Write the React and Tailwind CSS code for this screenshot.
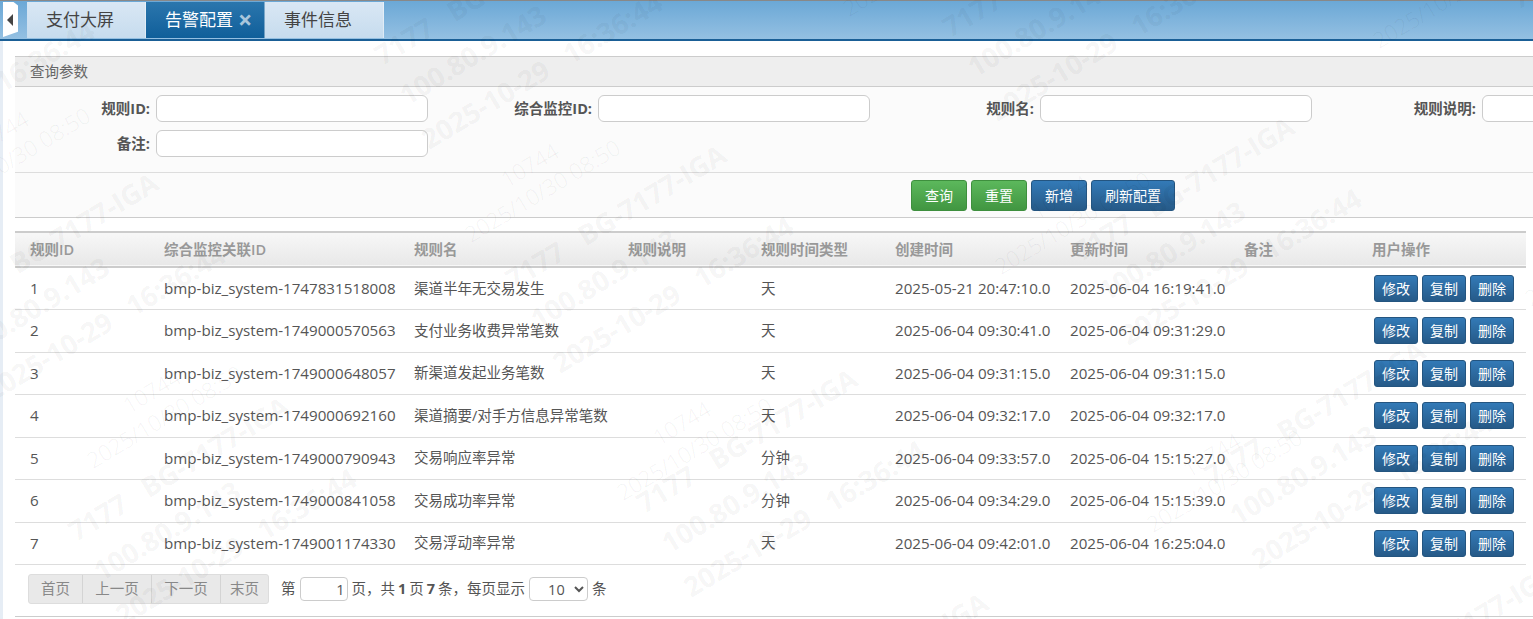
const ROWS = [
  ['1', 'bmp-biz_system-1747831518008', '渠道半年无交易发生', '天', '2025-05-21 20:47:10.0', '2025-06-04 16:19:41.0'],
  ['2', 'bmp-biz_system-1749000570563', '支付业务收费异常笔数', '天', '2025-06-04 09:30:41.0', '2025-06-04 09:31:29.0'],
  ['3', 'bmp-biz_system-1749000648057', '新渠道发起业务笔数', '天', '2025-06-04 09:31:15.0', '2025-06-04 09:31:15.0'],
  ['4', 'bmp-biz_system-1749000692160', '渠道摘要/对手方信息异常笔数', '天', '2025-06-04 09:32:17.0', '2025-06-04 09:32:17.0'],
  ['5', 'bmp-biz_system-1749000790943', '交易响应率异常', '分钟', '2025-06-04 09:33:57.0', '2025-06-04 15:15:27.0'],
  ['6', 'bmp-biz_system-1749000841058', '交易成功率异常', '分钟', '2025-06-04 09:34:29.0', '2025-06-04 15:15:39.0'],
  ['7', 'bmp-biz_system-1749001174330', '交易浮动率异常', '天', '2025-06-04 09:42:01.0', '2025-06-04 16:25:04.0'],
];

const HEADERS = ['规则ID', '综合监控关联ID', '规则名', '规则说明', '规则时间类型', '创建时间', '更新时间', '备注', '用户操作'];
const COL_WIDTHS = [134, 250, 214, 133, 134, 175, 174, 128, 169];
const FORM_ROW = ['规则ID:', '综合监控ID:', '规则名:', '规则说明:'];

// the screenshot has two overlaid watermark layers with their own spacing
const BOLD_LINES = [
  ['7177\u00a0\u00a0\u00a0BG-7177-IGA', 0, 0],
  ['100.80.9.143', 25, 40],
  ['2025-10-29\u00a0\u00a0\u00a016:36:44', 47, 84],
];
const THIN_LINES = [
  ['10744', 0, 0],
  ['2025/10/30 08:50', -36, 55],
];

function Mark({ text, x, y, bold }) {
  return (
    <span
      className={`absolute origin-bottom-left -translate-y-full -rotate-[31deg] whitespace-nowrap leading-none ${
        bold ? 'text-[27.5px] font-bold text-black/[0.055]' : 'text-[22px] font-light text-black/[0.06]'
      }`}
      style={{ left: x, top: y }}
    >
      {text}
    </span>
  );
}

function Watermarks() {
  const marks = [];
  for (let r = -2; r < 3; r++) {
    for (let c = -2; c < 4; c++) {
      const bx = 515 + c * 568 + r * 131;
      const by = 293 - c * 28 + r * 224;
      BOLD_LINES.forEach(([text, dx, dy]) => marks.push({ text, x: bx + dx, y: by + dy, bold: true }));
      const tx = 508 + c * 530 + r * 152;
      const ty = 190 + c * 32 + r * 258;
      THIN_LINES.forEach(([text, dx, dy]) => marks.push({ text, x: tx + dx, y: ty + dy, bold: false }));
    }
  }
  return (
    <div className="pointer-events-none absolute inset-0 overflow-hidden">
      {marks
        .filter((m) => m.x > -300 && m.x < 1533 && m.y > -20 && m.y < 800)
        .map((m) => (
          <Mark key={`${m.text}-${m.x}-${m.y}`} {...m} />
        ))}
    </div>
  );
}

function Tab({ label, active }) {
  return (
    <div
      className={`flex h-[36px] w-[119px] items-center border-r border-white/40 pb-[1px] pl-[19px] text-[17px] ${
        active ? 'bg-linear-to-b from-[#2a76ad] to-[#0f5f9a] text-white' : 'bg-linear-to-b from-[#d9e7f4] to-[#c6dcee] text-[#444]'
      }`}
    >
      {label}
      {active && <span className="ml-[5px] text-[25px] font-bold leading-none text-[#a9c6dc]">×</span>}
    </div>
  );
}

function Btn({ children, green, className = '' }) {
  return (
    <button
      className={`rounded-[3px] border text-[14px] text-white ${
        green
          ? 'border-[#3e8f3e] bg-linear-to-b from-[#5cb85c] to-[#419641]'
          : 'border-[#245580] bg-linear-to-b from-[#337ab7] to-[#265a88]'
      } ${className}`}
    >
      {children}
    </button>
  );
}

function FormField({ label }) {
  return (
    <div className="flex items-center">
      <label className="w-[135px] text-right text-[14.5px] font-bold text-[#555]">{label}</label>
      <input className="ml-[6px] h-[27px] w-[272px] rounded-[6px] border border-[#ccc] bg-white" />
    </div>
  );
}

export default function App() {
  return (
    <div className="relative h-[619px] w-[1533px] overflow-hidden bg-white font-['Open_Sans','Noto_Sans_CJK_SC',sans-serif] text-[14.5px] text-[#555]">
      <div className="flex h-[41px] border-b-2 border-t border-b-[#1a5f96] border-t-[#888] bg-linear-to-b from-[#6ba8d6] to-[#94c0e2] pt-[1px]">
        <div className="ml-[3px] mr-[9px] flex h-[35px] w-[15px] items-center justify-center bg-white pr-[2px] [clip-path:polygon(0_0,70%_0,100%_10%,100%_85%,0_100%)]">
          <span className="h-0 w-0 border-y-[6px] border-r-[6px] border-y-transparent border-r-[#444]" />
        </div>
        <Tab label="支付大屏" />
        <Tab label="告警配置" active />
        <Tab label="事件信息" />
      </div>

      <div className="flex">
        <div className="h-[578px] w-[3px] shrink-0 bg-[#e6edf5]" />
        <div className="ml-[12px] mt-[15px] min-w-0 flex-1">
          <div className="w-[1518px] overflow-hidden border-b border-b-[#ccc] bg-[#fbfbfb]">
            <div className="flex h-[31px] items-center border-y border-[#ccc] bg-[#eee] pl-[15px] text-[#666]">查询参数</div>
            <div className="h-[86px] border-b border-[#ddd] pt-[8px]">
              <div className="grid w-[1768px] grid-cols-[442px_442px_442px_442px] gap-y-[8px]">
                {FORM_ROW.map((label) => (
                  <FormField key={label} label={label} />
                ))}
                <FormField label="备注:" />
              </div>
            </div>
            <div className="flex h-[44px] items-start justify-end gap-[4px] pr-[358px] pt-[7px]">
              <Btn green className="h-[31px] w-[56px]">查询</Btn>
              <Btn green className="h-[31px] w-[56px]">重置</Btn>
              <Btn className="h-[31px] w-[56px]">新增</Btn>
              <Btn className="h-[31px] w-[84px]">刷新配置</Btn>
            </div>
          </div>

          <table className="mt-[13px] w-[1511px] table-fixed border-collapse border-t-2 border-t-[#ccc] text-left">
            <colgroup>
              {COL_WIDTHS.map((w, i) => (
                <col key={i} style={{ width: w }} />
              ))}
            </colgroup>
            <thead>
              <tr className="h-[35px] border-b-2 border-b-[#ccc] bg-linear-to-b from-[#f8f8f8] to-[#e8e8e8]">
                {HEADERS.map((h) => (
                  <th key={h} className="pl-[15px] font-semibold text-[#999]">{h}</th>
                ))}
              </tr>
            </thead>
            <tbody>
              {ROWS.map((r) => (
                <tr key={r[0]} className="h-[42.5px] border-b border-b-[#ddd]">
                  <td className="pl-[15px] text-[15.15px]">{r[0]}</td>
                  <td className="pl-[15px] text-[15.15px]">{r[1]}</td>
                  <td className="whitespace-nowrap pl-[15px]">{r[2]}</td>
                  <td />
                  <td className="pl-[15px]">{r[3]}</td>
                  <td className="pl-[15px] text-[15.15px]">{r[4]}</td>
                  <td className="pl-[15px] text-[15.15px]">{r[5]}</td>
                  <td />
                  <td className="pl-[17px]">
                    <div className="flex gap-[4px]">
                      <Btn className="h-[27px] w-[44px]">修改</Btn>
                      <Btn className="h-[27px] w-[44px]">复制</Btn>
                      <Btn className="h-[27px] w-[44px]">删除</Btn>
                    </div>
                  </td>
                </tr>
              ))}
            </tbody>
          </table>

          <div className="flex h-[52px] w-[1518px] items-center border-b border-b-[#ccc] pb-[3px] pl-[13px]">
            <div className="flex h-[30px] overflow-hidden rounded-[3px] border border-[#ddd] bg-[#e9e9e9] text-[#888]">
              <span className="flex w-[53px] items-center justify-center">首页</span>
              <span className="flex w-[69px] items-center justify-center border-l border-[#d4d4d4]">上一页</span>
              <span className="flex w-[69px] items-center justify-center border-l border-[#d4d4d4]">下一页</span>
              <span className="flex w-[48px] items-center justify-center border-l border-[#d4d4d4]">末页</span>
            </div>
            <span className="ml-[12px]">第</span>
            <input readOnly value="1" className="ml-[4px] h-[24px] w-[48px] rounded-[4px] border border-[#ccc] bg-white pr-[2px] text-right" />
            <span className="ml-[4px]">页，共<b className="mx-[3px]">1</b>页<b className="mx-[3px]">7</b>条，每页显示</span>
            <select className="ml-[4px] h-[24px] w-[59px] rounded-[4px] border border-[#ccc] bg-white pl-[14px]">
              <option>10</option>
            </select>
            <span className="ml-[4px]">条</span>
          </div>
        </div>
      </div>

      <Watermarks />
    </div>
  );
}
